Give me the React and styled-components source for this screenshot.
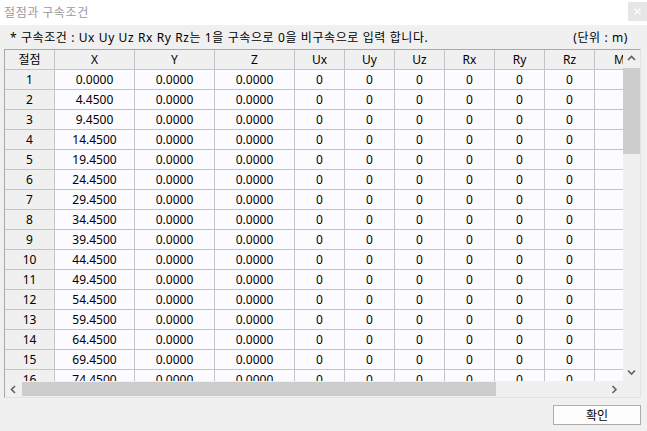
import React from "react";
import styled, { createGlobalStyle } from "styled-components";

const GlobalStyle = createGlobalStyle`
  html, body { margin: 0; padding: 0; }
  body {
    width: 647px;
    height: 431px;
    overflow: hidden;
    font-family: "Noto Sans", "Noto Sans CJK KR", sans-serif;
    font-size: 12px;
    color: #000;
    background: #f0f0f0;
  }
`;

const Window = styled.div`
  width: 647px;
  height: 431px;
  display: flex;
  flex-direction: column;
  background: #f0f0f0;
`;

const TitleBar = styled.div`
  height: 25px;
  flex: none;
  background: #fff;
  display: flex;
  align-items: flex-start;
  justify-content: space-between;
  padding-left: 4px;
  box-sizing: border-box;
`;

const Title = styled.span`
  font-family: "Noto Sans CJK KR", sans-serif;
  font-size: 12px;
  letter-spacing: 0.6px;
  line-height: 24px;
  color: #9a9a9a;
`;

const CloseButton = styled.div`
  width: 19px;
  height: 19px;
  margin-top: 2px;
  background: #e6e6e6;
  display: flex;
  align-items: center;
  justify-content: center;
`;

const Body = styled.div`
  flex: 1;
  display: flex;
  flex-direction: column;
  padding: 0 6px 6px 4px;
`;

const NoteRow = styled.div`
  height: 24px;
  display: flex;
  align-items: center;
  justify-content: space-between;
  padding: 0 13px 0 6px;
  font-family: "Noto Sans", "Noto Sans CJK KR", sans-serif;
  font-size: 12px;
  letter-spacing: 0.6px;
`;

const Frame = styled.div`
  height: 349px;
  box-sizing: border-box;
  border: 1px solid #a9a9a9;
  border-right-color: #e3e3e3;
  border-bottom-color: #e3e3e3;
  display: grid;
  grid-template-columns: 1fr 17px;
  grid-template-rows: 1fr 16px;
  background: #f0f0f0;
`;

const Viewport = styled.div`
  overflow: hidden;
  background: #f0f0f0;
`;

const Row = styled.div`
  display: flex;
  height: 20px;
`;

const Cell = styled.div`
  flex: none;
  width: ${(p) => p.$w}px;
  height: 20px;
  box-sizing: border-box;
  border-right: 1px solid #c4c4c4;
  border-bottom: 1px solid #c4c4c4;
  background: ${(p) => (p.$head ? "#f0f0f0" : "#fcfbff")};
  display: flex;
  align-items: center;
  justify-content: center;
  white-space: nowrap;
  overflow: hidden;
  line-height: 1;
  font-size: 12px;
  font-family: "Noto Sans", "Noto Sans CJK KR", sans-serif;
`;

const VScroll = styled.div`
  display: flex;
  flex-direction: column;
  background: #f0f0f0;
`;

const HScroll = styled.div`
  display: flex;
  align-items: stretch;
  background: #f0f0f0;
`;

const Corner = styled.div`
  background: #f0f0f0;
`;

const Arrow = styled.div`
  flex: none;
  width: ${(p) => p.$w}px;
  height: ${(p) => p.$h}px;
  display: flex;
  align-items: center;
  justify-content: center;
`;

const VTrack = styled.div`
  flex: 1;
  position: relative;
`;

const VThumb = styled.div`
  position: absolute;
  left: 0;
  right: 0;
  top: 1px;
  height: 86px;
  background: #cdcdcd;
`;

const HTrack = styled.div`
  flex: 1;
  position: relative;
`;

const HThumb = styled.div`
  position: absolute;
  top: 1px;
  bottom: 1px;
  left: 0;
  width: 474px;
  background: #cdcdcd;
`;

const Footer = styled.div`
  display: flex;
  justify-content: flex-end;
  padding-top: 7px;
`;

const OkButton = styled.button`
  width: 88px;
  height: 20px;
  margin: 0;
  padding: 0;
  box-sizing: border-box;
  border: 1px solid #adadad;
  background: #fdfdfd;
  font-family: "Noto Sans CJK KR", sans-serif;
  font-size: 12px;
  line-height: 1;
  color: #000;
`;

const Chevron = ({ dir }) => {
  const paths = {
    up: "M1 5 L4.5 1.5 L8 5",
    down: "M1 1.5 L4.5 5 L8 1.5",
    left: "M5 1 L1.5 4.5 L5 8",
    right: "M1.5 1 L5 4.5 L1.5 8",
  };
  const vertical = dir === "up" || dir === "down";
  return (
    <svg
      width={vertical ? 9 : 7}
      height={vertical ? 7 : 9}
      viewBox={vertical ? "0 0 9 7" : "0 0 7 9"}
    >
      <path d={paths[dir]} fill="none" stroke="#606060" strokeWidth="1.6" />
    </svg>
  );
};

const CloseGlyph = () => (
  <svg width="7" height="7" viewBox="0 0 7 7">
    <path d="M0.5 0.5 L6.5 6.5 M6.5 0.5 L0.5 6.5" stroke="#fff" strokeWidth="1.3" />
  </svg>
);

const columns = [
  { key: "no", label: "절점", w: 50 },
  { key: "x", label: "X", w: 80 },
  { key: "y", label: "Y", w: 80 },
  { key: "z", label: "Z", w: 80 },
  { key: "ux", label: "Ux", w: 50 },
  { key: "uy", label: "Uy", w: 50 },
  { key: "uz", label: "Uz", w: 50 },
  { key: "rx", label: "Rx", w: 50 },
  { key: "ry", label: "Ry", w: 50 },
  { key: "rz", label: "Rz", w: 50 },
  { key: "m", label: "M", w: 50 },
];

const nodes = Array.from({ length: 16 }, (_, i) => ({
  no: String(i + 1),
  x: (i === 0 ? 0 : 4.45 + (i - 1) * 5).toFixed(4),
  y: "0.0000",
  z: "0.0000",
  ux: "0",
  uy: "0",
  uz: "0",
  rx: "0",
  ry: "0",
  rz: "0",
  m: "",
}));

export default function App() {
  return (
    <>
      <GlobalStyle />
      <Window>
        <TitleBar>
          <Title>절점과 구속조건</Title>
          <CloseButton>
            <CloseGlyph />
          </CloseButton>
        </TitleBar>
        <Body>
          <NoteRow>
            <span>* 구속조건 : Ux Uy Uz Rx Ry Rz는 1을 구속으로 0을 비구속으로 입력 합니다.</span>
            <span>(단위 : m)</span>
          </NoteRow>
          <Frame>
            <Viewport>
              <Row>
                {columns.map((c) => (
                  <Cell key={c.key} $w={c.w} $head>
                    {c.label}
                  </Cell>
                ))}
              </Row>
              {nodes.map((n) => (
                <Row key={n.no}>
                  {columns.map((c) => (
                    <Cell key={c.key} $w={c.w} $head={c.key === "no"}>
                      {n[c.key]}
                    </Cell>
                  ))}
                </Row>
              ))}
            </Viewport>
            <VScroll>
              <Arrow $w={17} $h={17}>
                <Chevron dir="up" />
              </Arrow>
              <VTrack>
                <VThumb />
              </VTrack>
              <Arrow $w={17} $h={17}>
                <Chevron dir="down" />
              </Arrow>
            </VScroll>
            <HScroll>
              <Arrow $w={17} $h={16}>
                <Chevron dir="left" />
              </Arrow>
              <HTrack>
                <HThumb />
              </HTrack>
              <Arrow $w={17} $h={16}>
                <Chevron dir="right" />
              </Arrow>
            </HScroll>
            <Corner />
          </Frame>
          <Footer>
            <OkButton>확인</OkButton>
          </Footer>
        </Body>
      </Window>
    </>
  );
}
